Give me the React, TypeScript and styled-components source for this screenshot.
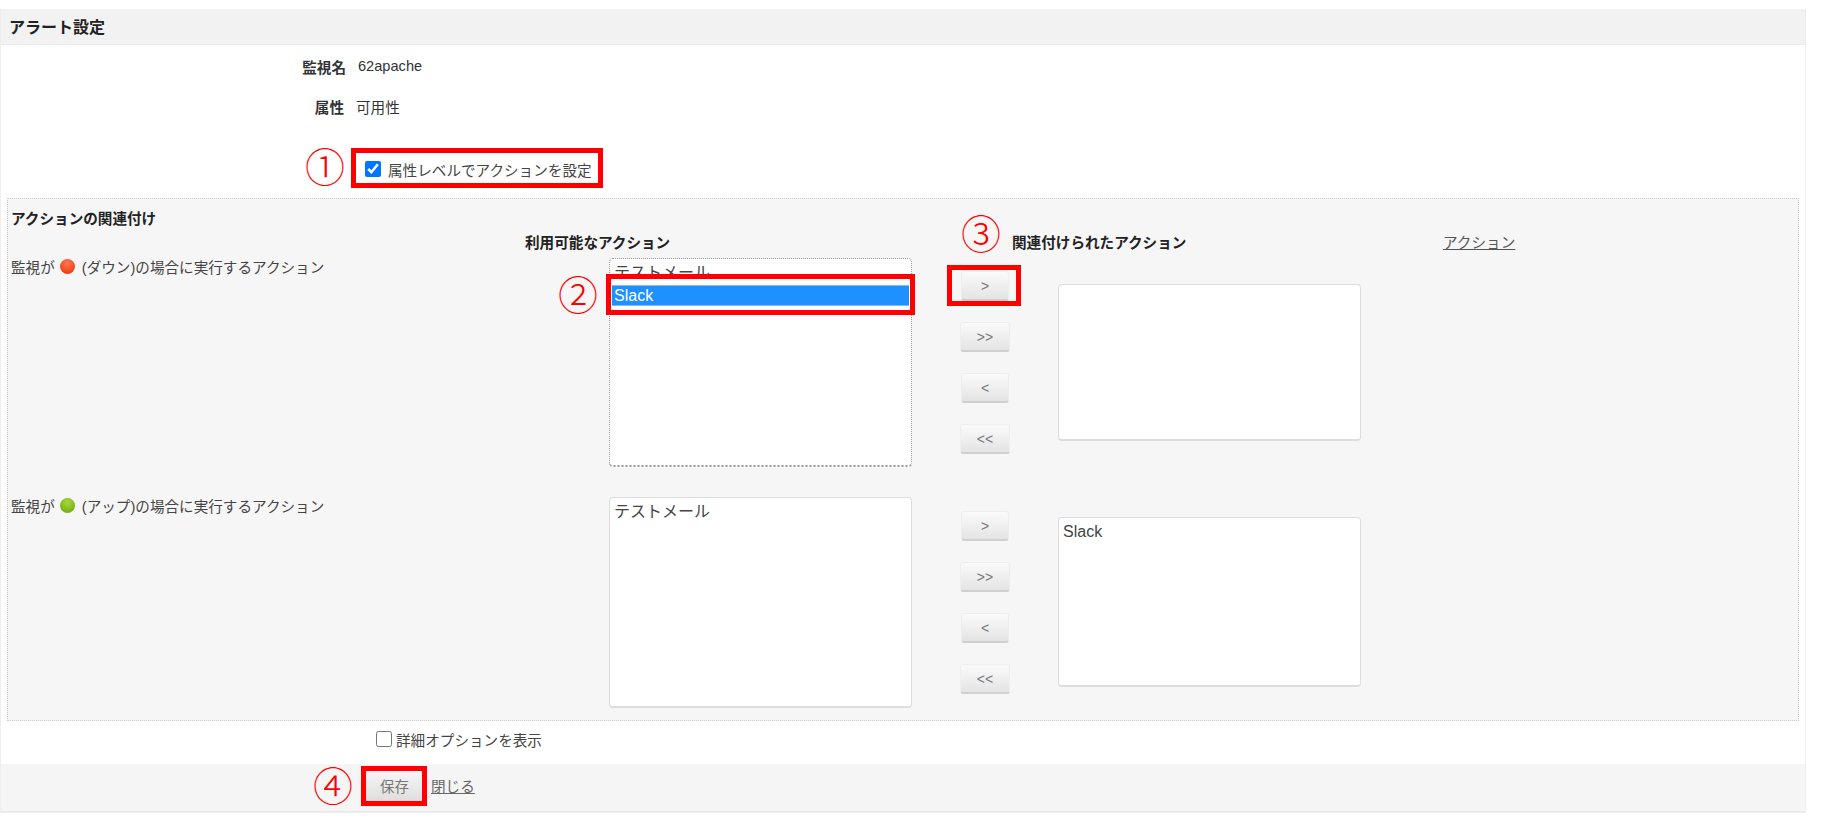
import React from 'react'
import styled, { createGlobalStyle } from 'styled-components'

const GlobalStyle = createGlobalStyle`
  * {
    box-sizing: border-box;
  }
  body {
    margin: 0;
    background: #fff;
    color: #333;
    font-family: "Liberation Sans", "Noto Sans CJK JP", sans-serif;
    font-size: 14.6px;
  }
`

const moveButtons = ['>', '>>', '<', '<<']

export default function App() {
  return (
    <Page>
      <GlobalStyle />
      <Panel>
        <Header>アラート設定</Header>

        <FieldRow $height={42}>
          <FieldLabel $width={345}>監視名</FieldLabel>
          <span>62apache</span>
        </FieldRow>
        <FieldRow $height={39}>
          <FieldLabel $width={343}>属性</FieldLabel>
          <span>可用性</span>
        </FieldRow>

        <AttributeRow>
          <CheckLabel>
            <input type="checkbox" defaultChecked />
            属性レベルでアクションを設定
            <NumberMarker $top={-14} $left={-60}>①</NumberMarker>
            <RedBox $top={-11} $right={-11} $bottom={-9} $left={-14} />
          </CheckLabel>
        </AttributeRow>

        <ActionPanel>
          <SectionTitle>アクションの関連付け</SectionTitle>
          <ColumnHeads>
            <span />
            <b>利用可能なアクション</b>
            <b>関連付けられたアクション</b>
            <ActionLink href="#">アクション</ActionLink>
          </ColumnHeads>

          <ActionRow $buttonTop={13} $assignedTop={26}>
            <RowLabel>
              監視が<StatusDot $color="#f0421c" $light="#ff7a50" />(ダウン)の場合に実行するアクション
            </RowLabel>
            <ListBox $height={209} $focused>
              <ListItem>テストメール</ListItem>
              <SelectedItem>
                Slack
                <NumberMarker $top={-13} $left={-54}>②</NumberMarker>
                <RedBox $top={-12} $right={-6} $bottom={-10} $left={-6} />
              </SelectedItem>
            </ListBox>
            <ButtonColumn>
              {moveButtons.map((label, index) => (
                <MoveButton key={label} $wide={label.length > 1}>
                  {label}
                  {index === 0 && (
                    <>
                      <NumberMarker $top={-60} $left={-1}>③</NumberMarker>
                      <RedBox $top={-7} $right={-13} $bottom={-7} $left={-15} />
                    </>
                  )}
                </MoveButton>
              ))}
            </ButtonColumn>
            <ListBox $height={157} />
          </ActionRow>

          <ActionRow $buttonTop={14} $assignedTop={20}>
            <RowLabel>
              監視が<StatusDot $color="#78b414" $light="#a8d840" />(アップ)の場合に実行するアクション
            </RowLabel>
            <ListBox $height={211}>
              <ListItem>テストメール</ListItem>
            </ListBox>
            <ButtonColumn>
              {moveButtons.map(label => (
                <MoveButton key={label} $wide={label.length > 1}>
                  {label}
                </MoveButton>
              ))}
            </ButtonColumn>
            <ListBox $height={170}>
              <ListItem>Slack</ListItem>
            </ListBox>
          </ActionRow>
        </ActionPanel>

        <DetailRow>
          <DetailLabel>
            <input type="checkbox" />
            詳細オプションを表示
          </DetailLabel>
        </DetailRow>

        <Footer>
          <SaveButton>
            保存
            <NumberMarker $top={-7} $left={-53}>④</NumberMarker>
            <RedBox $top={-5} $right={-4} $bottom={-5} $left={-5} />
          </SaveButton>
          <CloseLink href="#">閉じる</CloseLink>
        </Footer>
      </Panel>
    </Page>
  )
}

const Page = styled.div`
  width: 1824px;
  height: 832px;
  padding-top: 9px;
`

const Panel = styled.div`
  width: 1806px;
  border: 1px solid #eeeeee;
  border-top: 0;
`

const Header = styled.div`
  display: flex;
  align-items: center;
  height: 36px;
  padding: 0 0 2px 8px;
  background: #f2f2f2;
  border-bottom: 1px solid #ebebeb;
  font-size: 16px;
  font-weight: 700;
  color: #222;
`

const FieldRow = styled.div<{ $height: number }>`
  display: flex;
  align-items: center;
  height: ${({ $height }) => $height}px;
  gap: 12px;
`

const FieldLabel = styled.b<{ $width: number }>`
  width: ${({ $width }) => $width}px;
  text-align: right;
`

const AttributeRow = styled.div`
  display: flex;
  height: 72px;
  padding: 33px 0 0 364px;
`

const CheckLabel = styled.label`
  position: relative;
  display: flex;
  align-items: center;
  gap: 7px;
  height: 20px;
  color: #444;

  input {
    width: 16px;
    height: 16px;
    margin: 0;
  }
`

const RedBox = styled.span<{ $top: number; $right: number; $bottom: number; $left: number }>`
  position: absolute;
  top: ${({ $top }) => $top}px;
  right: ${({ $right }) => $right}px;
  bottom: ${({ $bottom }) => $bottom}px;
  left: ${({ $left }) => $left}px;
  border: 5px solid #ff0000;
  pointer-events: none;
`

const NumberMarker = styled.span<{ $top: number; $left: number }>`
  position: absolute;
  top: ${({ $top }) => $top}px;
  left: ${({ $left }) => $left}px;
  font-family: "Noto Sans CJK JP", sans-serif;
  font-size: 40px;
  font-weight: 300;
  line-height: 40px;
  color: #ff0000;
`

const ActionPanel = styled.div`
  width: 1792px;
  height: 523px;
  margin-left: 6px;
  padding: 0 0 0 3px;
  background: #f6f6f6;
  border: 1px dotted #c8c8c8;
`

const SectionTitle = styled.div`
  height: 20px;
  margin-top: 10px;
  line-height: 20px;
  font-weight: 700;
  color: #222;
`

const ColumnHeads = styled.div`
  display: grid;
  grid-template-columns: 514px 487px 431px auto;
  height: 20px;
  margin-top: 4px;
  line-height: 20px;

  b {
    color: #222;
  }
`

const ActionLink = styled.a`
  color: #555;
  text-decoration: underline;
`

const ActionRow = styled.div<{ $buttonTop: number; $assignedTop: number }>`
  display: grid;
  grid-template-columns: 550px 303px 50px 303px;
  column-gap: 48px;
  align-items: start;
  margin-top: 5px;
  margin-bottom: 30px;

  & > :nth-child(3) {
    margin-top: ${({ $buttonTop }) => $buttonTop}px;
  }
  & > :nth-child(4) {
    margin-top: ${({ $assignedTop }) => $assignedTop}px;
  }
`

const RowLabel = styled.div`
  display: flex;
  align-items: center;
  height: 20px;
  margin-top: -2px;
  color: #444;
`

const StatusDot = styled.span<{ $color: string; $light: string }>`
  width: 15px;
  height: 15px;
  margin: 0 7px 0 5px;
  border-radius: 50%;
  background: radial-gradient(circle at 50% 30%, ${({ $light }) => $light}, ${({ $color }) => $color} 70%);
`

const ListBox = styled.div<{ $height?: number; $focused?: boolean }>`
  height: ${({ $height }) => $height}px;
  padding: 3px 2px;
  background: #fff;
  border-radius: 4px;
  border: ${({ $focused }) => ($focused ? '1px dotted #999' : '1px solid #dddddd')};
  border-bottom-width: 2px;
  font-size: 16px;
  color: #444;
`

const ListItem = styled.div`
  height: 22px;
  padding: 0 2px;
  line-height: 22px;
`

const SelectedItem = styled(ListItem)`
  position: relative;
  height: 21px;
  margin-top: 1px;
  line-height: 19px;
  background: #1e90ff;
  border-top: 1px solid #7dbdfb;
  border-bottom: 1px solid #7dbdfb;
  color: #fff;
`

const ButtonColumn = styled.div`
  display: flex;
  flex-direction: column;
  align-items: center;
  gap: 21px;
`

const MoveButton = styled.button<{ $wide: boolean }>`
  position: relative;
  width: ${({ $wide }) => ($wide ? 50 : 48)}px;
  height: 30px;
  padding: 0;
  background: linear-gradient(#fafafa, #e4e4e4);
  border: 1px solid #eeeeee;
  border-bottom: 2px solid #d0d0d0;
  border-radius: 3px;
  font-family: inherit;
  font-size: 14px;
  color: #777;
`

const DetailRow = styled.div`
  height: 43px;
  padding: 8px 0 0 375px;
`

const DetailLabel = styled.label`
  display: flex;
  align-items: center;
  gap: 4px;
  height: 20px;
  color: #444;

  input {
    width: 16px;
    height: 16px;
    margin: 0;
  }
`

const Footer = styled.div`
  display: flex;
  align-items: center;
  gap: 8px;
  height: 48px;
  padding: 0 0 4px 365px;
  background: #f5f5f5;
  border-bottom: 1px solid #e8e8e8;
`

const SaveButton = styled.button`
  position: relative;
  width: 57px;
  height: 30px;
  padding: 0;
  background: linear-gradient(#f6f6f6, #dedede);
  border: 0;
  font-family: inherit;
  font-size: 14.4px;
  color: #777;
`

const CloseLink = styled.a`
  color: #666;
  text-decoration: underline;
`
